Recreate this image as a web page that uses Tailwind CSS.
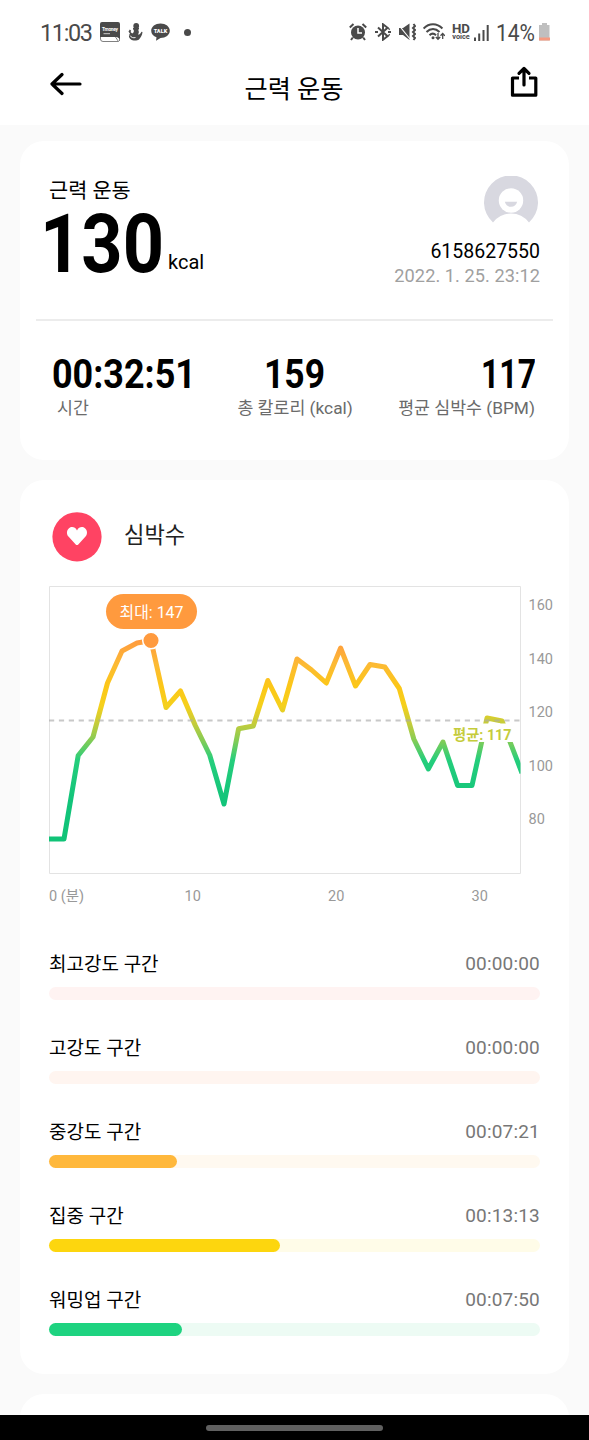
<!DOCTYPE html>
<html lang="ko">
  <head>
    <meta charset="UTF-8" />
    <title>근력 운동</title>
    <script src="https://cdn.jsdelivr.net/npm/@tailwindcss/browser@4"></script>
  </head>
  <body class="bg-[#fafafa] font-[Roboto,'Noto_Sans_CJK_KR',sans-serif] text-black">
    <div class="flex flex-col w-[589px] h-[1440px] overflow-hidden">
      <header class="h-[125px] shrink-0 bg-white">
        <!-- Status bar -->
        <div class="flex items-center justify-between h-16 pl-10 pr-[38px] text-[#4a4a4a]">
          <div class="flex items-center">
            <svg class="w-[53px] h-7" viewBox="0 0 53 28"><text x="0" y="23" font-size="23.500" textLength="53" fill="currentColor">11:03</text></svg>
            <svg class="w-5 h-5 ml-[7px]" viewBox="0 0 20 20" fill="currentColor">
              <path d="M2 0h16a2 2 0 0 1 2 2v15l-3-2H0V2a2 2 0 0 1 2-2z" />
              <path d="M.5 15v2a2.500 2.500 0 0 0 2.500 2.500h15.500l-3-4.500M19.500 15v4" fill="none" stroke="currentColor" stroke-width=".7" />
              <text x="2" y="9" font-size="4.800" font-weight="700" fill="#fff" textLength="16">Tmoney</text>
              <path d="M3.500 11.700h6.500" stroke="#ddd" stroke-width=".9" />
            </svg>
            <svg class="w-[15px] h-[18px] ml-[8px]" viewBox="0 0 15 18" fill="currentColor">
              <circle cx="8.200" cy="3" r="2.900" />
              <path d="M5 5h6v1.500H5zM5.500 6.500h4.500c1.300 2 1 3.500 0 5 1.500 0 2.500-.8 3.500-2.800l1 .4c-.3 3-1.500 5.500-3.500 7.400-2 1.500-6.500 1.300-8 0C.5 14.500.5 12 2 10.700L.5 8.500l1.300-2 1.400 1.300L2.500 9l1.700 1.500c1.800-1 2-2.500 1.300-4z" />
              <path d="M2 12.500c1 2 3.500 2.700 5.500 2" fill="none" stroke="#fff" stroke-width=".9" />
            </svg>
            <svg class="w-[19px] h-[18px] ml-[8px]" viewBox="0 0 19 18" fill="currentColor">
              <path d="M9.500.5c5.200 0 9.300 3.200 9.300 7.300s-4.100 7.200-9.300 7.200L5 17.800l.5-3.500C2.300 13.200.2 10.800.2 7.800.2 3.700 4.300.5 9.500.5z" />
              <text x="2.700" y="10" font-size="6" font-weight="900" fill="#fff" textLength="13.500" lengthAdjust="spacingAndGlyphs">TALK</text>
            </svg>
            <span class="w-[7px] h-[7px] ml-[14px] rounded-full bg-[#4a4a4a]"></span>
          </div>
          <div class="flex items-center">
            <svg class="w-[18px] h-[18px]" viewBox="0 0 18 18" fill="none" stroke="currentColor">
              <circle cx="9" cy="9.500" r="7" fill="currentColor" stroke="none" />
              <path d="M.8 4.500 4.500 1M17.200 4.500 13.500 1" stroke-width="2" />
              <path d="M3.800 14.500 2 17M14.200 14.500 16 17" stroke-width="2" />
              <path d="M9 5v5h4" stroke="#fff" stroke-width="1.500" />
            </svg>
            <svg class="w-4 h-[18px] ml-[8px]" viewBox="0 0 16 18" fill="none" stroke="currentColor" stroke-width="2">
              <path d="m3 4.500 9.500 8.700L8 16.700V1.300l4.500 3.500L3 13.500" />
              <path d="M0 9h3M13 9h3M13.500 6.300l1-.8M13.500 11.700l1 .8" stroke-width="2.200" />
            </svg>
            <svg class="w-[18px] h-[18px] ml-[7px]" viewBox="0 0 18 18" fill="currentColor">
              <path d="M1 5h4l6.500-4.500v16.500L5 12H1z" />
              <path d="m0 1 12 15" stroke="#fff" stroke-width="1.100" />
              <path d="M15.500 1l1.500 2-2 2 2 2-2 2 2 2-2 2 2 2-1.500 2" fill="none" stroke="currentColor" stroke-width="2" />
            </svg>
            <svg class="w-[22px] h-[18px] ml-[7px]" viewBox="0 0 22 18" fill="none" stroke="currentColor" stroke-width="2">
              <path d="M.6 5.500C6-.2 14-.2 19.400 5.500M3.500 9c4-4 9-4 13 0M6.500 12.200c2-2 4.500-2 6.500 0" />
              <path d="M15 10v6M12.800 14l2.200 2.300 2.200-2.300M19.700 16v-5M17.500 12.800l2.200-2.300 2.200 2.300" stroke-width="1.300" />
              <circle cx="10" cy="14.800" r="1.500" fill="currentColor" stroke="none" />
            </svg>
            <svg class="w-[18px] h-[18px] ml-[7px]" viewBox="0 0 18 18" fill="currentColor">
              <text x="0" y="9.500" font-size="12.500" font-weight="700" textLength="18" lengthAdjust="spacingAndGlyphs">HD</text>
              <text x=".3" y="16" font-size="7" font-weight="700" textLength="17.500" lengthAdjust="spacingAndGlyphs">voice</text>
            </svg>
            <svg class="w-[15px] h-[17px] ml-[4px]" viewBox="0 0 15 17" stroke="currentColor" stroke-width="2">
              <path d="M1 17v-3.500M5.200 17V9.500M9.500 17V6M13.700 17V1" />
            </svg>
            <svg class="w-[39px] h-7 ml-[7px]" viewBox="0 0 39 28"><text x="0" y="23" font-size="23" textLength="39" lengthAdjust="spacingAndGlyphs" fill="currentColor">14%</text></svg>
            <svg class="w-[13px] h-[18px] ml-[3px]" viewBox="0 0 13 18">
              <path d="M4 0h5v2h2.500v15.500H1V2h3z" fill="#bfbfbf" />
              <path d="M1 14.500h11v3H1z" fill="#f59a80" />
            </svg>
          </div>
        </div>
        <!-- Title bar -->
        <div class="flex justify-between h-[61px] pl-[50px] pr-[51px]">
          <svg class="w-8 h-6 mt-2" viewBox="0 0 32 24" fill="none" stroke="#000" stroke-width="3.200" stroke-linecap="round" stroke-linejoin="round">
            <path d="M30 12H2M12 2.500 2 12l10 9.500" />
          </svg>
          <h1 class="mt-2 pr-[4px] text-[25.200px] leading-9">근력 운동</h1>
          <svg class="w-7 h-8 mt-[2px]" viewBox="0 0 28 32" fill="none" stroke="#000" stroke-width="3.200" stroke-linecap="round" stroke-linejoin="round">
            <path d="M9 12H2.500v17.200h23.300V12H19" stroke-linecap="butt" />
            <path d="M14 19V3M9 7.300 14 2.500l5 4.800" />
          </svg>
        </div>
      </header>

      <main class="flex flex-col gap-5 px-5 pt-4 h-[1290px] shrink-0 overflow-hidden">
        <!-- Workout summary -->
        <section class="h-[319px] shrink-0 rounded-3xl bg-white px-4 pt-[35px]">
          <div class="flex justify-between h-[145px] border-b-2 border-[#ececec] pl-[8px] pr-[13px]">
            <div>
              <div class="pt-[2px] pl-[5px] text-[20.800px] leading-[26px]">근력 운동</div>
              <div class="flex">
                <svg class="w-[120px] h-[76px] overflow-visible" viewBox="0 0 120 76">
                  <text x="-4" y="67.500" font-size="82" font-weight="700" textLength="124" lengthAdjust="spacingAndGlyphs">130</text>
                </svg>
                <span class="mt-[46px] ml-[4px] text-[20px] leading-6">kcal</span>
              </div>
            </div>
            <div class="flex flex-col items-end">
              <svg class="w-[54px] h-[48px] mr-[2px]" viewBox="0 0 54 48">
                <path d="M9 46.500A27 27 0 1 1 45 46.500Q38 37.500 27 37.500T9 46.500z" fill="#d8d8e0" />
                <circle cx="27" cy="24.500" r="12.200" fill="#fff" />
                <path d="M20.800 25.800h12.400q-1.500 5-6.200 5t-6.200-5z" fill="#d8d8e0" />
              </svg>
              <div class="mt-4 text-[19.500px] leading-6">6158627550</div>
              <div class="text-[18.200px] leading-6 tracking-[.05px] text-[#a0a0a0]">2022. 1. 25. 23:12</div>
            </div>
          </div>
          <div class="flex justify-between pt-[33px] pl-4 pr-[18px] text-[#6b6b6b] text-[17.300px]">
            <div class="w-[144px]">
              <svg class="w-[144px] h-10" viewBox="0 0 144 40"><text x="0" y="34" font-size="41.500" font-weight="700" textLength="144" lengthAdjust="spacingAndGlyphs" fill="#000">00:32:51</text></svg>
              <div class="pt-[2px] pl-[5px] leading-6">시간</div>
            </div>
            <div class="flex flex-col items-center pr-[4px]">
              <svg class="w-[60px] h-10" viewBox="0 0 60 40"><text x="-1" y="34" font-size="41.500" font-weight="700" textLength="61" lengthAdjust="spacingAndGlyphs" fill="#000">159</text></svg>
              <div class="pt-[2px] leading-6">총 칼로리 (kcal)</div>
            </div>
            <div class="flex flex-col items-end">
              <svg class="w-[54px] h-10" viewBox="0 0 54 40"><text x="0" y="34" font-size="41.500" font-weight="700" textLength="55" lengthAdjust="spacingAndGlyphs" fill="#000">117</text></svg>
              <div class="pt-[2px] leading-6">평균 심박수 (BPM)</div>
            </div>
          </div>
        </section>

        <!-- Heart rate -->
        <section class="h-[894px] shrink-0 rounded-3xl bg-white px-[29px]">
          <div class="flex h-[106px] pt-8 pl-[3px]">
            <svg class="w-[50px] h-[50px]" viewBox="0 0 50 50">
              <circle cx="25" cy="24.800" r="24.600" fill="#ff4363" />
              <path d="M25 18.500c-2-4.300-6-4-8-2.300-2.800 2.500-2.500 6.300-.3 8.600l7 7.600q1.300 1.300 2.600 0l7-7.600c2.200-2.300 2.500-6.100-.3-8.600-2-1.700-6-2-8 2.300z" fill="#fff" />
            </svg>
            <h2 class="ml-[22px] mt-[7px] text-[22.200px] leading-8 text-[#222]">심박수</h2>
          </div>

          <svg class="block w-[515px] h-[330px]" viewBox="49 586 515 330">
            <defs>
              <linearGradient id="bpm" gradientUnits="userSpaceOnUse" x1="0" y1="640" x2="0" y2="840">
                <stop offset="0" stop-color="#ff9a3e" />
                <stop offset=".12" stop-color="#fcba35" />
                <stop offset=".23" stop-color="#fcc718" />
                <stop offset=".33" stop-color="#f5d01c" />
                <stop offset=".42" stop-color="#c3cc3b" />
                <stop offset=".5" stop-color="#86cc55" />
                <stop offset=".6" stop-color="#25ce7c" />
                <stop offset=".8" stop-color="#12c47a" />
                <stop offset="1" stop-color="#10c377" />
              </linearGradient>
              <clipPath id="plot"><path d="M49 587h471.500v287H49z" /></clipPath>
            </defs>
            <path d="M49.500 586.500h471v287h-471z" fill="none" stroke="#e3e3e3" />
            <polyline clip-path="url(#plot)" fill="none" stroke="url(#bpm)" stroke-width="5" stroke-linejoin="round"
              points="49,839 64,839 78.200,755.500 93,737 107.500,683 122,651 137,643 151,640.500 166,707.500 180.500,691 195.300,725.500 209.700,755 224,804 238.600,728.700 253.300,726 267.800,680.500 282.500,710 297,659 311.600,670 326.300,683 340.600,648 355.500,686 370,664.500 384.800,667 399.300,688.500 413.800,739 428.300,769 443,742 457.600,785.500 472,785.500 487,718 502,721 522,773" />
            <path d="M49 720.500h471" stroke="#aaa" stroke-opacity=".65" stroke-width="2" stroke-dasharray="5.200 4.700" />
            <path d="M451 723.500h63v18.500h-63z" fill="#fff" />
            <text x="453" y="739.500" font-size="15" font-weight="700" fill="#c5cc3b" textLength="58.500" lengthAdjust="spacingAndGlyphs">평균: 117</text>
            <circle cx="151" cy="640.500" r="8.300" fill="#ff9a3e" stroke="#fff" stroke-width="1.500" />
            <rect x="106" y="594" width="91" height="35" rx="17.500" fill="#ff9a3e" />
            <text x="119.500" y="617.500" font-size="16" fill="#fff" textLength="64" lengthAdjust="spacingAndGlyphs">최대: 147</text>
            <g font-size="14.500" fill="#999">
              <text x="528.500" y="610">160</text>
              <text x="528.500" y="663.500">140</text>
              <text x="528.500" y="717">120</text>
              <text x="528.500" y="771">100</text>
              <text x="528.500" y="824">80</text>
              <text x="49" y="901">0 (분)</text>
              <text x="184.500" y="901">10</text>
              <text x="328" y="901">20</text>
              <text x="471.500" y="901">30</text>
            </g>
          </svg>

          <!-- Intensity zones -->
          <div class="flex flex-col gap-[42px] pt-[31px] text-[19px]">
            <div class="flex flex-col gap-1 h-[42px]">
              <div class="flex justify-between leading-9"><span>최고강도 구간</span><span class="-mt-px tracking-[.2px] text-[#777]">00:00:00</span></div>
              <div class="h-[13px] shrink-0 rounded-full bg-[#fff3f2]"></div>
            </div>
            <div class="flex flex-col gap-1 h-[42px]">
              <div class="flex justify-between leading-9"><span>고강도 구간</span><span class="-mt-px tracking-[.2px] text-[#777]">00:00:00</span></div>
              <div class="h-[13px] shrink-0 rounded-full bg-[#fff5f0]"></div>
            </div>
            <div class="flex flex-col gap-1 h-[42px]">
              <div class="flex justify-between leading-9"><span>중강도 구간</span><span class="-mt-px tracking-[.2px] text-[#777]">00:07:21</span></div>
              <div class="h-[13px] shrink-0 rounded-full bg-[#fff9f0]"><div class="h-full w-[128px] rounded-full bg-[#ffb83c]"></div></div>
            </div>
            <div class="flex flex-col gap-1 h-[42px]">
              <div class="flex justify-between leading-9"><span>집중 구간</span><span class="-mt-px tracking-[.2px] text-[#777]">00:13:13</span></div>
              <div class="h-[13px] shrink-0 rounded-full bg-[#fffce8]"><div class="h-full w-[231px] rounded-full bg-[#fdd60e]"></div></div>
            </div>
            <div class="flex flex-col gap-1 h-[42px]">
              <div class="flex justify-between leading-9"><span>워밍업 구간</span><span class="-mt-px tracking-[.2px] text-[#777]">00:07:50</span></div>
              <div class="h-[13px] shrink-0 rounded-full bg-[#edfbf4]"><div class="h-full w-[133px] rounded-full bg-[#1ed380]"></div></div>
            </div>
          </div>
        </section>

        <section class="h-20 shrink-0 rounded-3xl bg-white"></section>
      </main>

      <!-- Gesture bar -->
      <footer class="flex justify-center h-[25px] shrink-0 bg-black pt-[10px]">
        <div class="w-[177px] h-[6px] rounded-full bg-[#606060]"></div>
      </footer>
    </div>
  </body>
</html>
